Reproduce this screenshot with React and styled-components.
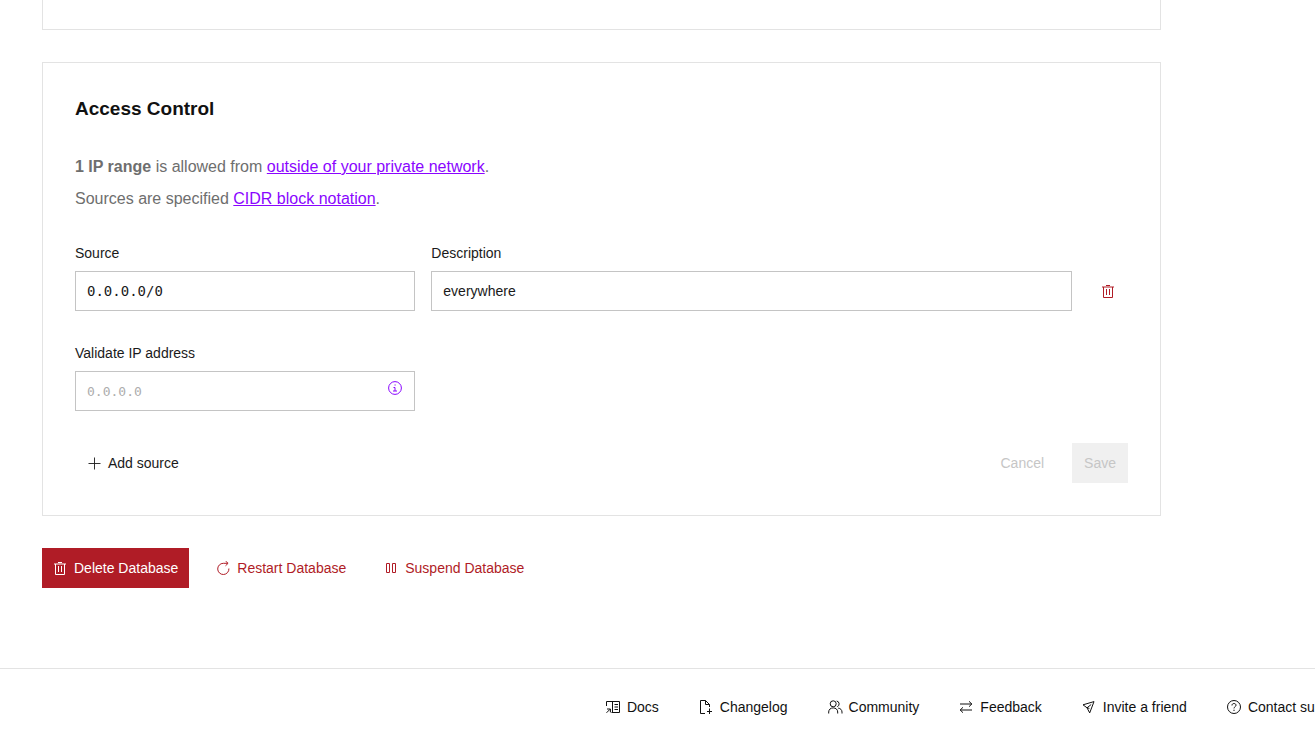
import React from 'react';
import styled, { createGlobalStyle, css } from 'styled-components';

const colors = {
  text: '#1a1a1a',
  muted: '#6e6e6e',
  disabled: '#c6c6c6',
  border: '#e3e3e3',
  field: '#c4c4c4',
  link: '#8a05ff',
  danger: '#b01c26',
};

const sans = '"Liberation Sans", Arial, sans-serif';
const mono = '"DejaVu Sans Mono", "Liberation Mono", monospace';

const GlobalStyle = createGlobalStyle`
  *, *::before, *::after { box-sizing: border-box; }
  body {
    margin: 0;
    background: #fff;
    color: ${colors.text};
    font: 14px/20px ${sans};
    overflow-x: hidden;
  }
`;

const Main = styled.main`
  display: flex;
  flex-direction: column;
  gap: 32px;
  padding: 0 154px 80px 42px;
`;

const PreviousCard = styled.section`
  height: 30px;
  border: 1px solid ${colors.border};
  border-top: 0;
`;

const Card = styled.section`
  padding: 32px;
  border: 1px solid ${colors.border};
`;

const Title = styled.h2`
  margin: 0 0 28px;
  font-size: 19px;
  line-height: 28px;
  font-weight: 700;
  color: #111;
`;

const Paragraph = styled.p`
  margin: 0;
  font-size: 16px;
  line-height: 32px;
  color: ${colors.muted};
`;

const TextLink = styled.a`
  color: ${colors.link};
  text-decoration: underline;
`;

const Form = styled.form`
  display: grid;
  grid-template-columns: repeat(12, minmax(0, 1fr));
  gap: 32px 16px;
  margin-top: 28px;
`;

const Field = styled.div`
  grid-column: span 4;
  flex: 1;
  min-width: 0;
`;

const DescriptionRow = styled.div`
  grid-column: span 8;
  display: flex;
  align-items: flex-end;
  gap: 16px;
`;

const Label = styled.label`
  display: block;
  margin-bottom: 8px;
`;

const InputWrap = styled.div`
  position: relative;
`;

const Input = styled.input`
  display: block;
  width: 100%;
  height: 40px;
  padding: 0 11px;
  border: 1px solid ${colors.field};
  border-radius: 0;
  background: #fff;
  color: ${colors.text};
  font: 14px/20px ${(p) => (p.$mono ? mono : sans)};

  &::placeholder {
    color: #adadad;
    font-size: 13px;
    opacity: 1;
  }
`;

const InfoButton = styled.button`
  position: absolute;
  top: 9px;
  right: 12px;
  display: flex;
  padding: 0;
  border: 0;
  background: none;
  color: ${colors.link};
`;

const FormActions = styled.div`
  grid-column: 1 / -1;
  display: flex;
  gap: 16px;
`;

const Spacer = styled.div`
  flex: 1;
`;

const Actions = styled.div`
  display: flex;
  gap: 16px;
`;

const variants = {
  plain: css`
    background: transparent;
    color: ${colors.text};
  `,
  danger: css`
    background: ${colors.danger};
    color: #fff;
  `,
  dangerText: css`
    background: transparent;
    color: ${colors.danger};
  `,
  filled: css`
    background: #f0f0f0;
    color: ${colors.text};
  `,
};

const Button = styled.button`
  display: inline-flex;
  align-items: center;
  justify-content: center;
  gap: 6px;
  height: 40px;
  min-width: 40px;
  padding: 0 ${(p) => (p.$compact ? 11 : 12)}px;
  border: 0;
  font: 14px/20px ${sans};
  white-space: nowrap;
  ${(p) => variants[p.$variant || 'plain']}

  &:disabled {
    color: ${colors.disabled};
  }
`;

const Footer = styled.footer`
  border-top: 1px solid ${colors.border};
  padding: 28px 0 24px;
  overflow: hidden;
`;

const FooterNav = styled.nav`
  display: flex;
  gap: 40px;
  margin-left: 46%;
  padding-left: 1px;
`;

const FooterLink = styled.a`
  display: flex;
  flex-shrink: 0;
  align-items: center;
  gap: 6px;
  color: #111;
  text-decoration: none;
  white-space: nowrap;
`;

const Svg = styled.svg`
  display: block;
  flex-shrink: 0;
  width: 15px;
  height: 15px;
  fill: none;
  stroke: currentColor;
  stroke-width: 1;
`;

const icons = {
  trash: (
    <>
      <path d="M1 3h12M2.5 3v10.5h9V3" />
      <path d="M5 1.5h4" />
      <path d="M5.5 5v6M8.5 5v6" />
    </>
  ),
  plus: <path d="M7.5 1.5v12M1.5 7.5h12" strokeWidth="0.9" />,
  restart: (
    <>
      <path d="M12.9 7.5A5.6 5.6 0 1 1 7.3 2.3h4.5" />
      <path d="M9.5 0l2.6 2.3-2.6 2.5" />
    </>
  ),
  pause: <path d="M2.5 2.5h3v9h-3zM8.5 2.5h3v9h-3z" />,
  info: (
    <>
      <circle cx="7" cy="8" r="6.4" />
      <path d="M5.5 7.5H7v3.5M5 11h4M6.5 5h1.2" />
    </>
  ),
  docs: (
    <>
      <path d="M.5 6V1.5h13v11H5.5M6.5 1.5v11" />
      <path d="M8.5 4.5H12M8.5 7H12M8.5 9.5H12" />
      <path d="M.5 12.8l3.6-3.6M1 9h3.4v3.4" />
    </>
  ),
  changelog: (
    <>
      <path d="M6 13.5H1.5V.5h5l4 4V7M6.5.5v4h4" />
      <path d="M10.5 8.5v5.5M8 11.5h5" />
    </>
  ),
  community: (
    <>
      <circle cx="5.2" cy="3.8" r="3" />
      <path d="M8.7 1a3 3 0 0 1 .6 5.7M.7 13.5V12C.7 9.5 2.6 7.9 5.2 7.9S9.7 9.5 9.7 12v1.5M10.2 8.1c2.3.3 3.8 1.8 3.8 4v1.4" />
    </>
  ),
  feedback: (
    <>
      <path d="M1 4h12M10 1.3L12.8 4 10 6.7" />
      <path d="M13 10H1M4 7.3L1.2 10 4 12.7" />
    </>
  ),
  invite: <path d="M12 1.6L1 4.8l4 3 2.7 5.1zM5 7.8l4.2-3.3M5 7.8l2.4.6" />,
  help: (
    <>
      <circle cx="7" cy="7" r="6.5" />
      <path d="M5 5.5V5.3c0-1.1.8-1.8 2-1.8s2 .7 2 1.7C9 6.7 7 6.7 7 8.4M7 9.7V11" />
    </>
  ),
};

const Icon = ({ name }) => (
  <Svg viewBox="0 0 15 15" aria-hidden="true">
    {icons[name]}
  </Svg>
);

const footerLinks = [
  ['docs', 'Docs'],
  ['changelog', 'Changelog'],
  ['community', 'Community'],
  ['feedback', 'Feedback'],
  ['invite', 'Invite a friend'],
  ['help', 'Contact support'],
];

export default function App() {
  return (
    <>
      <GlobalStyle />
      <Main>
        <PreviousCard />
        <Card>
          <Title>Access Control</Title>
          <Paragraph>
            <strong>1 IP range</strong> is allowed from{' '}
            <TextLink href="#private-network">outside of your private network</TextLink>.
          </Paragraph>
          <Paragraph>
            Sources are specified <TextLink href="#cidr">CIDR block notation</TextLink>.
          </Paragraph>
          <Form onSubmit={(e) => e.preventDefault()}>
            <Field>
              <Label htmlFor="source">Source</Label>
              <Input id="source" $mono defaultValue="0.0.0.0/0" />
            </Field>
            <DescriptionRow>
              <Field>
                <Label htmlFor="description">Description</Label>
                <Input id="description" defaultValue="everywhere" />
              </Field>
              <Button type="button" $variant="dangerText" aria-label="Remove source">
                <Icon name="trash" />
              </Button>
            </DescriptionRow>
            <Field>
              <Label htmlFor="validate">Validate IP address</Label>
              <InputWrap>
                <Input id="validate" $mono placeholder="0.0.0.0" />
                <InfoButton type="button" aria-label="About IP validation">
                  <Icon name="info" />
                </InfoButton>
              </InputWrap>
            </Field>
            <FormActions>
              <Button type="button">
                <Icon name="plus" />
                Add source
              </Button>
              <Spacer />
              <Button type="button" disabled>Cancel</Button>
              <Button type="submit" $variant="filled" disabled>Save</Button>
            </FormActions>
          </Form>
        </Card>
        <Actions>
          <Button type="button" $variant="danger" $compact>
            <Icon name="trash" />
            Delete Database
          </Button>
          <Button type="button" $variant="dangerText" $compact>
            <Icon name="restart" />
            Restart Database
          </Button>
          <Button type="button" $variant="dangerText" $compact>
            <Icon name="pause" />
            Suspend Database
          </Button>
        </Actions>
      </Main>
      <Footer>
        <FooterNav aria-label="Footer">
          {footerLinks.map(([icon, label]) => (
            <FooterLink key={icon} href={`#${icon}`}>
              <Icon name={icon} />
              {label}
            </FooterLink>
          ))}
        </FooterNav>
      </Footer>
    </>
  );
}
